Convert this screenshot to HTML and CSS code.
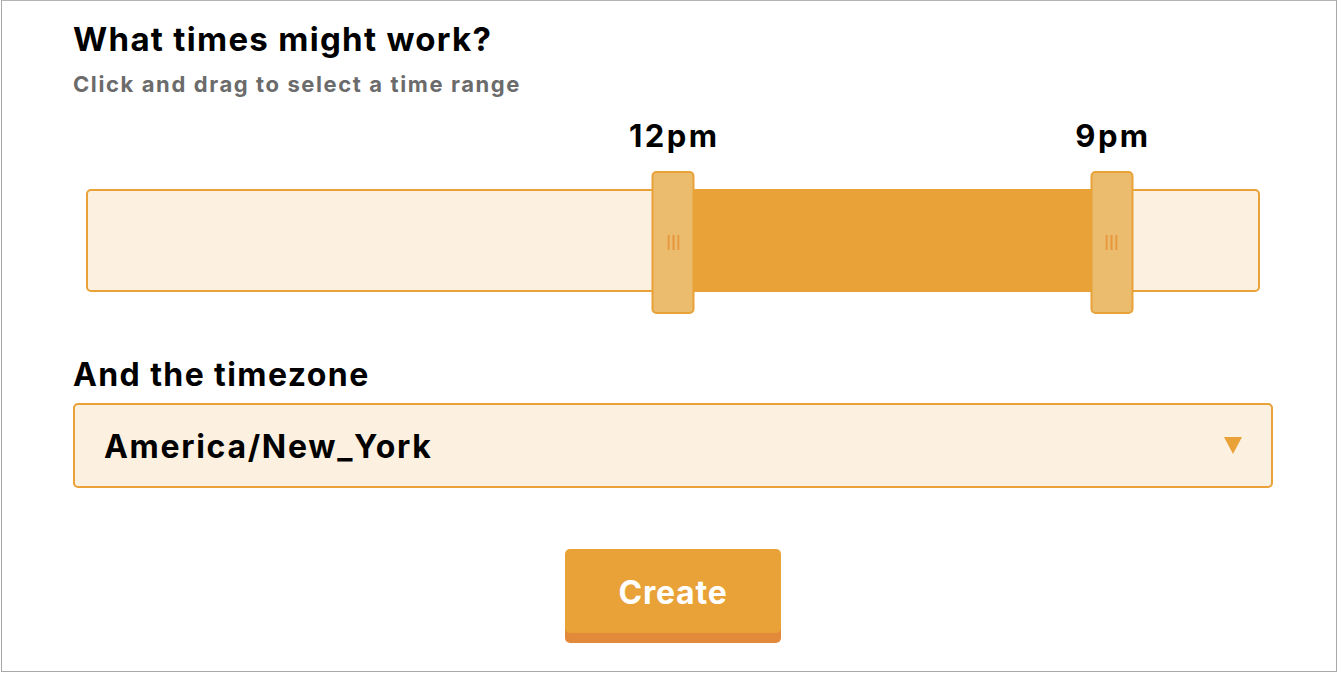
FILE: index.html
```html
<!DOCTYPE html>
<html lang="en">
<head>
<meta charset="utf-8">
<title>Create event</title>
<link rel="stylesheet" href="styles.css">
</head>
<body>
<div class="frame">
  <main class="content">
    <h2 class="title">What times might work?</h2>
    <p class="hint">Click and drag to select a time range</p>

    <div class="range">
      <div class="track">
        <div class="selected" style="left: 50%; width: 37.5%;"></div>
        <div class="handle" style="left: 50%;">
          <span class="handle-label">12pm</span>
          <svg class="grip" width="12" height="15" viewBox="0 0 12 15"><rect x="0" y="0" width="2" height="15"/><rect x="5" y="0" width="2" height="15"/><rect x="10" y="0" width="2" height="15"/></svg>
        </div>
        <div class="handle" style="left: 87.5%;">
          <span class="handle-label">9pm</span>
          <svg class="grip" width="12" height="15" viewBox="0 0 12 15"><rect x="0" y="0" width="2" height="15"/><rect x="5" y="0" width="2" height="15"/><rect x="10" y="0" width="2" height="15"/></svg>
        </div>
      </div>
    </div>

    <label class="tz-label">And the timezone</label>
    <div class="select">
      <span class="select-value">America/New_York</span>
      <svg class="select-arrow" width="18" height="17" viewBox="0 0 18 17"><polygon points="0,0 18,0 9,17"/></svg>
    </div>

    <div class="actions">
      <button class="create" type="button">Create</button>
    </div>
  </main>
</div>
</body>
</html>
```

FILE: styles.css
```css
* { box-sizing: border-box; }

html, body {
  margin: 0;
  padding: 0;
  background: #ffffff;
}

body {
  font-family: "Inter", "Liberation Sans", sans-serif;
  color: #000;
}

.frame {
  margin-left: 1px;
  width: 1336px;
  height: 672px;
  border: 1px solid #a8a8a8;
  border-top-color: #b4b4b4;
  background: #fff;
  overflow: hidden;
}

.content {
  width: 1200px;
  margin-left: 71px;
  padding-top: 18px;
  display: flex;
  flex-direction: column;
}

.title {
  margin: 0;
  font-size: 33px;
  line-height: 40px;
  font-weight: 700;
  letter-spacing: 1.3px;
}

.hint {
  margin: 11px 0 0;
  font-size: 22px;
  line-height: 28px;
  font-weight: 700;
  letter-spacing: 1.6px;
  color: #6b6b6b;
}

.range {
  padding: 91px 13px 0;
}

.track {
  position: relative;
  height: 103px;
  border: 2px solid #e8a238;
  border-radius: 5px;
  background: #fcf0e0;
}

.selected {
  position: absolute;
  top: -2px;
  bottom: -2px;
  background: #e8a238;
}

.handle {
  position: absolute;
  top: -20px;
  width: 43px;
  height: 143px;
  transform: translateX(-50%);
  background: #ebbb6e;
  border: 2px solid #e8a238;
  border-radius: 5px;
  display: flex;
  align-items: center;
  justify-content: center;
}

.grip {
  fill: #e8963a;
}

.handle-label {
  position: absolute;
  bottom: 100%;
  left: 50%;
  transform: translateX(-50%);
  margin-bottom: 19px;
  padding-left: 2.4px;
  font-size: 31px;
  line-height: 36px;
  font-weight: 700;
  letter-spacing: 2.4px;
  white-space: nowrap;
}

.tz-label {
  margin-top: 63px;
  font-size: 32px;
  line-height: 40px;
  font-weight: 700;
  letter-spacing: 1.4px;
}

.select {
  margin-top: 8px;
  height: 85px;
  border: 2px solid #e8a238;
  border-radius: 5px;
  background: #fcf0e0;
  display: flex;
  align-items: center;
  justify-content: space-between;
  padding: 2px 29px 0 29px;
}

.select-value {
  font-size: 32px;
  font-weight: 700;
  letter-spacing: 1.7px;
}

.select-arrow {
  fill: #e8a238;
  margin-top: -2px;
}

.actions {
  display: flex;
  justify-content: center;
  margin-top: 61px;
}

.create {
  width: 216px;
  height: 84px;
  padding-top: 4px;
  border: none;
  border-radius: 5px;
  background: #e8a238;
  box-shadow: 0 10px 0 #e3893a;
  color: #fff;
  font-family: inherit;
  font-size: 32px;
  font-weight: 700;
  letter-spacing: 0.8px;
  cursor: pointer;
}
```
